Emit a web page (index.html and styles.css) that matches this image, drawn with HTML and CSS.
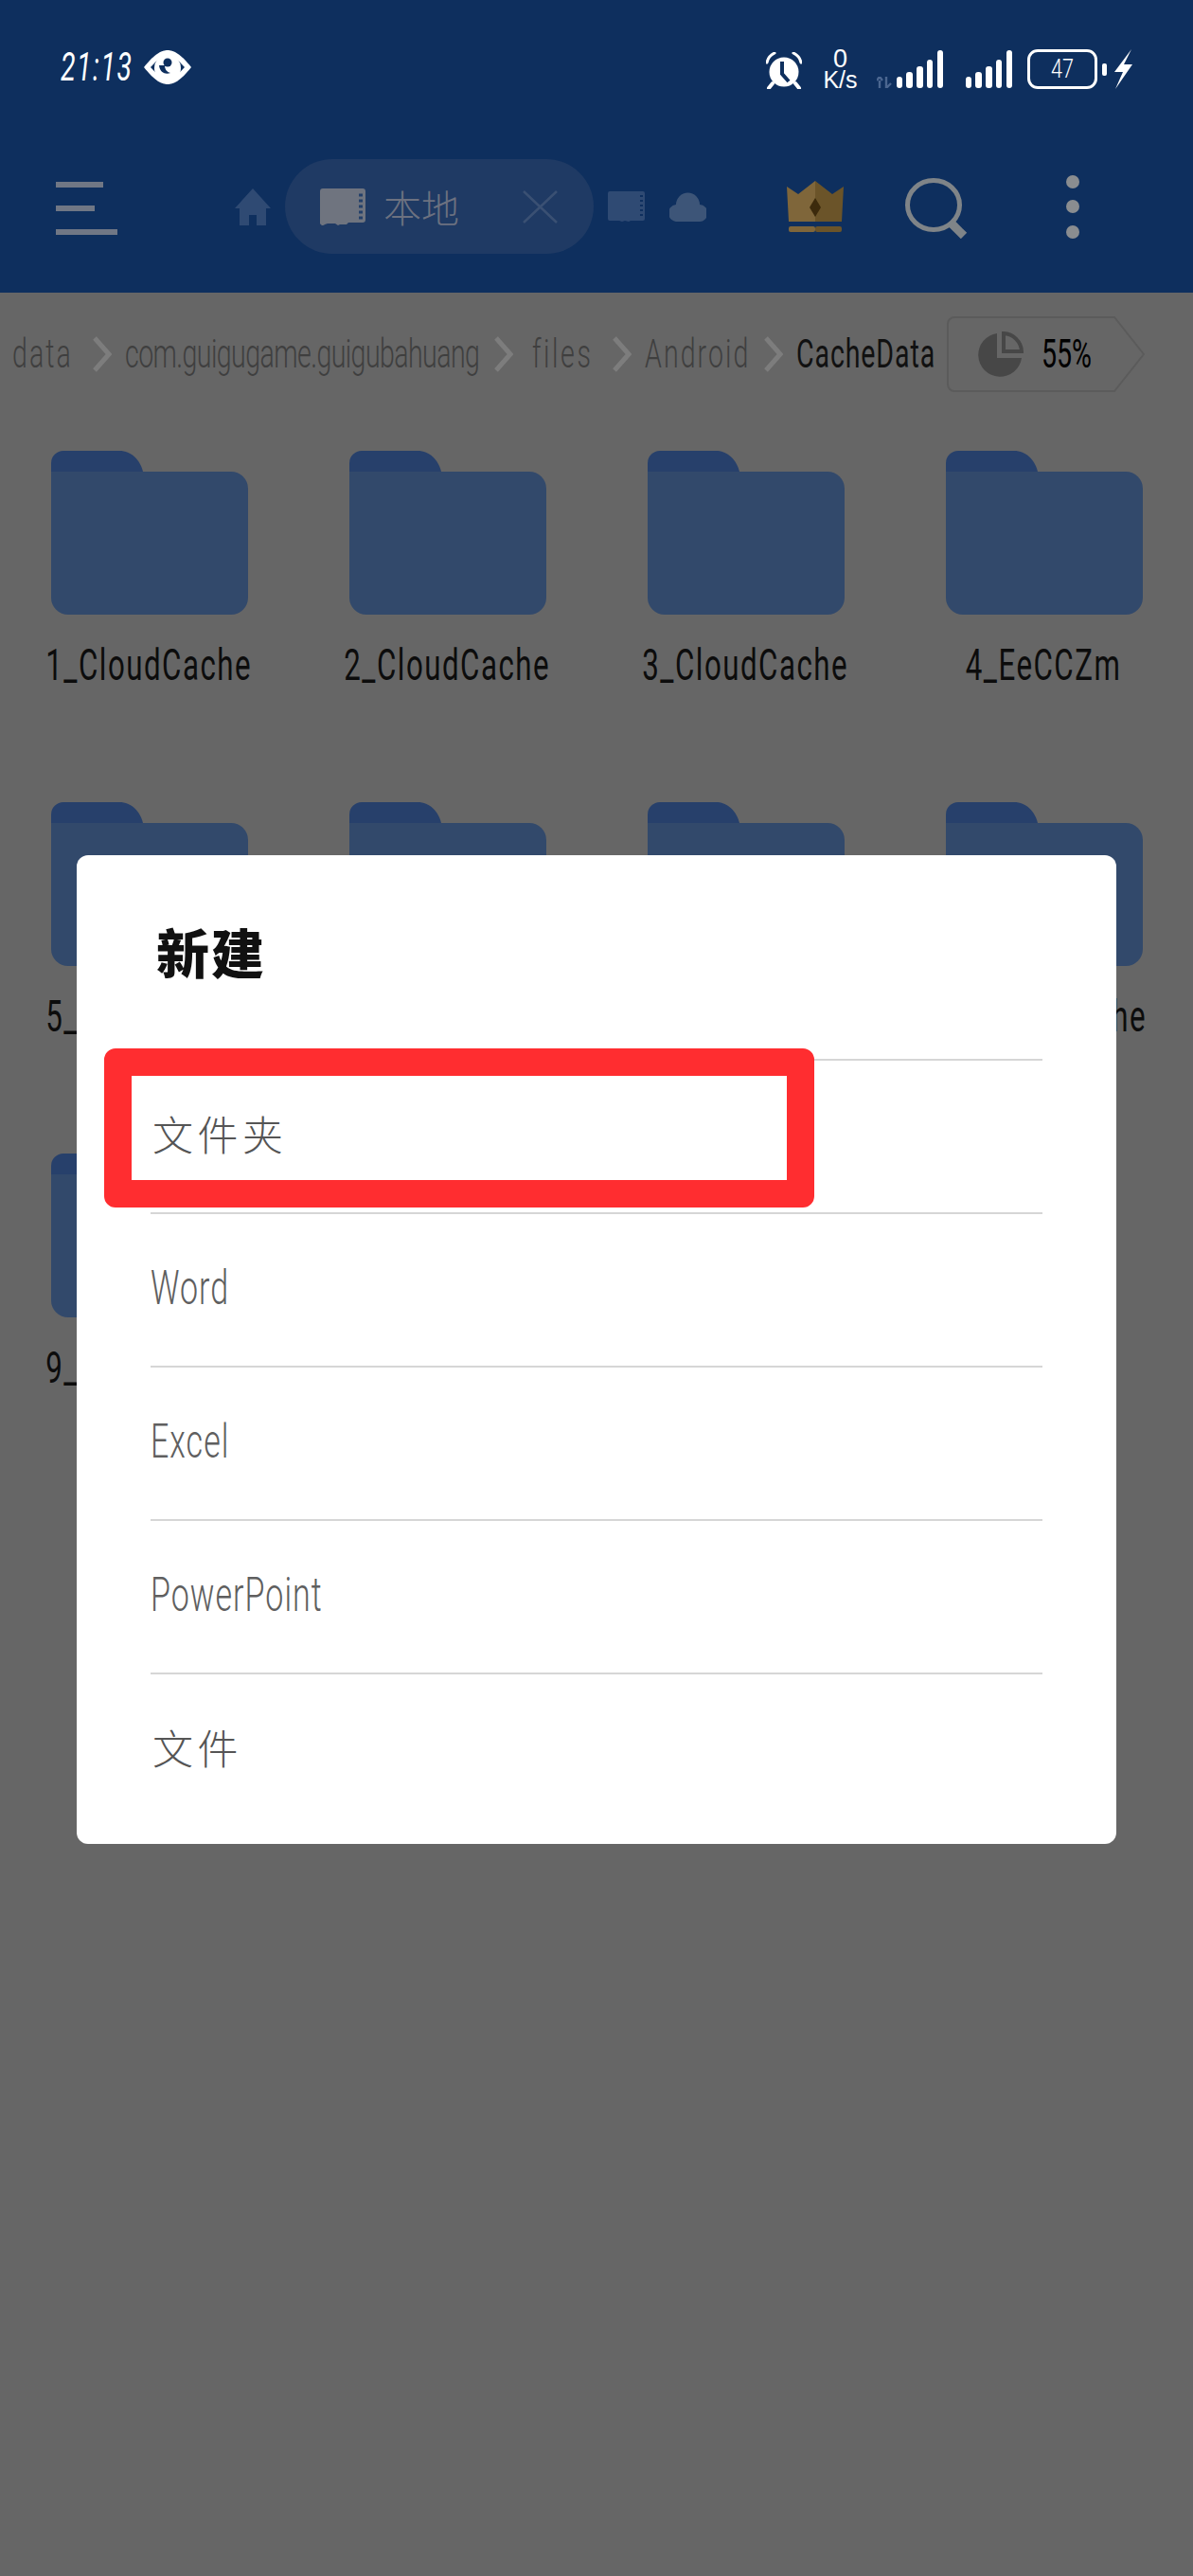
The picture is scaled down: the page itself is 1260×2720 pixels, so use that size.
FILE: index.html
```html
<!DOCTYPE html>
<html lang="zh">
<head>
<meta charset="utf-8">
<title>新建</title>
<link rel="stylesheet" href="styles.css">
</head>
<body>
<div class="screen">
  <header class="top">
    <div class="status">
      <div class="status-left">
        <span class="time"><span class="thin-text">21:13</span></span>
        <svg class="eye" viewBox="0 0 52 36"><path d="M1 18C13 3 20 0 26 0s13 3 25 18C39 33 32 36 26 36S13 33 1 18Z" fill="#fff"/><path d="M8 18C16 9 21 6 26 6s10 3 18 12C36 27 31 30 26 30S16 27 8 18Z" fill="#0e2f5e"/><circle cx="26" cy="19" r="14" fill="#fff"/><path d="M17 16c1 8 7 10 12 8-4-1-6-4-6-8Z" fill="#0e2f5e"/><circle cx="26" cy="13" r="4.5" fill="#0e2f5e"/></svg>
      </div>
      <div class="status-right">
        <svg class="alarm" viewBox="0 0 38 39"><circle cx="19" cy="21" r="15.5" fill="#fff"/><path d="M1 11C2 6 5 3 9 1M37 11C36 6 33 3 29 1" stroke="#fff" stroke-width="3" fill="none" stroke-linecap="round"/><path d="M7 33l-4 5M31 33l4 5" stroke="#fff" stroke-width="4" stroke-linecap="round"/><path d="M17 10v13l7 8" stroke="#0e2f5e" stroke-width="4" fill="none"/></svg>
        <div class="speed"><span class="speed-num">0</span><span class="speed-unit">K/s</span></div>
        <svg class="arrows" viewBox="0 0 16 12"><path d="M3 12V4M0 4l3-4 3 4M10 0v12M10 12l5-5" stroke="#4b6690" stroke-width="2.4" fill="none"/></svg>
        <svg class="signal" viewBox="0 0 50 40"><rect x="0" y="28" width="6" height="12" rx="3"/><rect x="10" y="23" width="7" height="17" rx="3"/><rect x="21" y="17" width="7" height="23" rx="3"/><rect x="32" y="10" width="6" height="30" rx="3"/><rect x="43" y="0" width="6" height="40" rx="3"/></svg>
        <svg class="signal signal-two" viewBox="0 0 50 40"><rect x="0" y="28" width="6" height="12" rx="3"/><rect x="10" y="23" width="7" height="17" rx="3"/><rect x="21" y="17" width="7" height="23" rx="3"/><rect x="32" y="10" width="6" height="30" rx="3"/><rect x="43" y="0" width="6" height="40" rx="3"/></svg>
        <div class="battery"><span class="battery-level">47</span></div>
        <span class="battery-tip"></span>
        <svg class="bolt" viewBox="0 0 20 42"><path d="M19 0 1 24h9L2 42 20 16h-9Z" fill="#fff"/></svg>
      </div>
    </div>
    <nav class="toolbar">
      <div class="menu"><span class="menu-line menu-a"></span><span class="menu-line menu-b"></span><span class="menu-line menu-c"></span></div>
      <svg class="home" viewBox="0 0 38 39"><path d="M19 0 38 21h-5v18H23V28h-8v11H5V21H0Z" fill="#2f4a73"/></svg>
      <div class="pill">
        <svg class="sd" viewBox="0 0 48 39"><path d="M3 0h42a3 3 0 0 1 3 3v30a3 3 0 0 1-3 3H30l-2 2h-7l-2 1-3-2H8l-3 1a3 3 0 0 1-5-3V3a3 3 0 0 1 3-3Z" fill="#6f747f"/><path d="M41 7h4M41 13h4M41 19h4M41 25h4M41 31h4" stroke="#24406a" stroke-width="3"/></svg>
        <span class="pill-text">本地</span>
        <svg class="close" viewBox="0 0 37 35"><path d="M1 1l35 33M36 1 1 34" stroke="#3a5073" stroke-width="2.5"/></svg>
      </div>
      <svg class="sd-small" viewBox="0 0 39 32"><path d="M2 0h35a2 2 0 0 1 2 2v27a2 2 0 0 1-2 2H24l-2 1-4-1-3 1-3-1H2a2 2 0 0 1-2-2V2a2 2 0 0 1 2-2Z" fill="#2f4a73"/><path d="M34 5h3M34 10h3M34 15h3M34 20h3M34 25h3" stroke="#0e2f5e" stroke-width="2"/></svg>
      <svg class="cloud" viewBox="0 0 39 32"><path d="M9 32a9 9 0 0 1-2-18 12.500 12.500 0 0 1 25 0 9 9 0 0 1-1 18Z" fill="#3d5578"/></svg>
      <svg class="crown" viewBox="0 0 60 54"><path d="M0 6 12 14 30 0V43H2Z" fill="#7f663a"/><path d="M60 6 48 14 30 0V43H58Z" fill="#6b5429"/><path d="M30 18l6 10-6 10-6-10Z" fill="#3c2a0c"/><rect x="2" y="48" width="28" height="6" rx="2" fill="#7f663a"/><rect x="30" y="48" width="28" height="6" rx="2" fill="#6b5429"/></svg>
      <svg class="search" viewBox="0 0 66 64"><ellipse cx="30" cy="28.500" rx="27.500" ry="26" fill="none" stroke="#7f8488" stroke-width="5"/><path d="M48 47 62 61" stroke="#7f8488" stroke-width="9"/></svg>
      <div class="dots"><span class="dot"></span><span class="dot"></span><span class="dot"></span></div>
    </nav>
  </header>

  <div class="crumbs">
    <span class="crumb crumb-data"><span class="thin-text">data</span></span>
    <svg class="chev" viewBox="0 0 21 38"><path d="M3 2l15 17L3 36" fill="none" stroke="#7d7d7d" stroke-width="5"/></svg>
    <span class="crumb crumb-com"><span class="thin-text">com.guigugame.guigubahuang</span></span>
    <svg class="chev" viewBox="0 0 21 38"><path d="M3 2l15 17L3 36" fill="none" stroke="#7d7d7d" stroke-width="5"/></svg>
    <span class="crumb crumb-files"><span class="thin-text">files</span></span>
    <svg class="chev" viewBox="0 0 21 38"><path d="M3 2l15 17L3 36" fill="none" stroke="#7d7d7d" stroke-width="5"/></svg>
    <span class="crumb crumb-android"><span class="thin-text">Android</span></span>
    <svg class="chev" viewBox="0 0 21 38"><path d="M3 2l15 17L3 36" fill="none" stroke="#7d7d7d" stroke-width="5"/></svg>
    <span class="crumb crumb-now"><span class="thin-text">CacheData</span></span>
    <div class="chip">
      <svg class="chip-shape" viewBox="0 0 209 80"><path d="M8 1H177L208 40 177 79H8a7 7 0 0 1-7-7V8a7 7 0 0 1 7-7Z" fill="none" stroke="#5b5b5b" stroke-width="2"/></svg>
      <svg class="pie" viewBox="0 0 48 48"><path d="M20 2A23 23 0 1 0 46 28H20Z" fill="#474747"/><path d="M27 2A20 20 0 0 1 46 21H27Z" fill="none" stroke="#474747" stroke-width="4"/></svg>
      <span class="chip-text"><span class="thin-text">55%</span></span>
    </div>
  </div>

  <main class="grid">
    <div class="item"><svg class="folder" viewBox="0 0 208 173"><path d="M13 0H72C85 0 94 10 97 22H0V13A13 13 0 0 1 13 0Z" fill="#27406b"/><path d="M0 22H190a18 18 0 0 1 18 18V155a18 18 0 0 1-18 18H18a18 18 0 0 1-18-18Z" fill="#32496b"/></svg><span class="label"><span class="thin-text">1_CloudCache</span></span></div>
    <div class="item"><svg class="folder" viewBox="0 0 208 173"><path d="M13 0H72C85 0 94 10 97 22H0V13A13 13 0 0 1 13 0Z" fill="#27406b"/><path d="M0 22H190a18 18 0 0 1 18 18V155a18 18 0 0 1-18 18H18a18 18 0 0 1-18-18Z" fill="#32496b"/></svg><span class="label"><span class="thin-text">2_CloudCache</span></span></div>
    <div class="item"><svg class="folder" viewBox="0 0 208 173"><path d="M13 0H72C85 0 94 10 97 22H0V13A13 13 0 0 1 13 0Z" fill="#27406b"/><path d="M0 22H190a18 18 0 0 1 18 18V155a18 18 0 0 1-18 18H18a18 18 0 0 1-18-18Z" fill="#32496b"/></svg><span class="label"><span class="thin-text">3_CloudCache</span></span></div>
    <div class="item"><svg class="folder" viewBox="0 0 208 173"><path d="M13 0H72C85 0 94 10 97 22H0V13A13 13 0 0 1 13 0Z" fill="#27406b"/><path d="M0 22H190a18 18 0 0 1 18 18V155a18 18 0 0 1-18 18H18a18 18 0 0 1-18-18Z" fill="#32496b"/></svg><span class="label"><span class="thin-text">4_EeCCZm</span></span></div>
    <div class="item"><svg class="folder" viewBox="0 0 208 173"><path d="M13 0H72C85 0 94 10 97 22H0V13A13 13 0 0 1 13 0Z" fill="#27406b"/><path d="M0 22H190a18 18 0 0 1 18 18V155a18 18 0 0 1-18 18H18a18 18 0 0 1-18-18Z" fill="#32496b"/></svg><span class="label"><span class="thin-text">5_CloudCache</span></span></div>
    <div class="item"><svg class="folder" viewBox="0 0 208 173"><path d="M13 0H72C85 0 94 10 97 22H0V13A13 13 0 0 1 13 0Z" fill="#27406b"/><path d="M0 22H190a18 18 0 0 1 18 18V155a18 18 0 0 1-18 18H18a18 18 0 0 1-18-18Z" fill="#32496b"/></svg><span class="label"><span class="thin-text">6_CloudCache</span></span></div>
    <div class="item"><svg class="folder" viewBox="0 0 208 173"><path d="M13 0H72C85 0 94 10 97 22H0V13A13 13 0 0 1 13 0Z" fill="#27406b"/><path d="M0 22H190a18 18 0 0 1 18 18V155a18 18 0 0 1-18 18H18a18 18 0 0 1-18-18Z" fill="#32496b"/></svg><span class="label"><span class="thin-text">7_CloudCache</span></span></div>
    <div class="item"><svg class="folder" viewBox="0 0 208 173"><path d="M13 0H72C85 0 94 10 97 22H0V13A13 13 0 0 1 13 0Z" fill="#27406b"/><path d="M0 22H190a18 18 0 0 1 18 18V155a18 18 0 0 1-18 18H18a18 18 0 0 1-18-18Z" fill="#32496b"/></svg><span class="label"><span class="thin-text">8_CloudCache</span></span></div>
    <div class="item"><svg class="folder" viewBox="0 0 208 173"><path d="M13 0H72C85 0 94 10 97 22H0V13A13 13 0 0 1 13 0Z" fill="#27406b"/><path d="M0 22H190a18 18 0 0 1 18 18V155a18 18 0 0 1-18 18H18a18 18 0 0 1-18-18Z" fill="#32496b"/></svg><span class="label"><span class="thin-text">9_CloudCache</span></span></div>
  </main>

  <section class="dialog">
    <h1 class="dialog-title">新建</h1>
    <ul class="options">
      <li class="option option-cjk">文件夹</li>
      <li class="option"><span class="thin-text">Word</span></li>
      <li class="option"><span class="thin-text">Excel</span></li>
      <li class="option"><span class="thin-text">PowerPoint</span></li>
      <li class="option option-cjk">文件</li>
    </ul>
    <div class="highlight"></div>
  </section>
</div>
</body>
</html>
```
FILE: styles.css
```css
* { box-sizing: border-box; }
html, body { margin: 0; padding: 0; }
body { background: #666; font-family: Roboto, "Liberation Sans", "Noto Sans CJK SC", sans-serif; font-weight: 300; }
.screen { position: relative; width: 1260px; height: 2720px; overflow: hidden; background: #666; }
.thin-text { display: inline-block; white-space: nowrap; transform: scaleX(0.68); transform-origin: 0 50%; }

.top { height: 309px; background: #0e2f5e; padding-top: 50px; }
.status { display: flex; justify-content: space-between; align-items: flex-start; height: 46px; padding: 0 64px; }
.status-left { display: flex; align-items: center; gap: 10px; height: 42px; }
.time { width: 77px; color: #fff; font-size: 42px; line-height: 42px; font-style: italic; font-weight: 400; letter-spacing: 2.200px; overflow: visible; }
.eye { width: 52px; height: 36px; }
.status-right { display: flex; align-items: flex-end; height: 44px; }
.alarm { width: 38px; height: 39px; margin-right: 21px; }
.speed { display: flex; flex-direction: column; align-items: center; width: 39px; color: #fff; font-family: "Liberation Sans", sans-serif; font-weight: 400; margin-right: 19px; }
.speed-num { font-size: 27px; line-height: 24px; }
.speed-unit { font-size: 25px; line-height: 20px; }
.arrows { width: 16px; height: 12px; margin-right: 5px; margin-bottom: 1px; }
.signal { width: 50px; height: 40px; fill: #fff; margin-bottom: 1px; }
.signal-two { margin-left: 23px; margin-right: 15px; }
.battery { display: flex; align-items: center; justify-content: center; width: 74px; height: 42px; border: 3px solid #fff; border-radius: 11px; }
.battery-level { color: #fff; font-size: 27px; line-height: 30px; transform: scaleX(0.8); }
.battery-tip { width: 5px; height: 13px; background: #fff; border-radius: 2px; margin: 0 7px 14px 5px; }
.bolt { width: 20px; height: 42px; }

.toolbar { display: flex; align-items: center; height: 100px; margin-top: 72px; padding-left: 59px; }
.menu { display: flex; flex-direction: column; width: 65px; gap: 19px; margin-top: 4px; }
.menu-line { display: block; height: 6px; background: #707785; }
.menu-a { width: 50px; }
.menu-b { width: 41px; }
.menu-c { width: 65px; }
.home { width: 38px; height: 39px; margin-left: 124px; }
.pill { display: flex; align-items: center; width: 326px; height: 100px; margin-left: 15px; padding-left: 37px; background: #1f3a64; border-radius: 50px; }
.sd { width: 48px; height: 39px; }
.pill-text { width: 147px; margin-left: 19px; color: #6c7180; font-size: 40px; font-family: "Noto Sans CJK SC", sans-serif; font-weight: 300; }
.close { width: 37px; height: 35px; }
.sd-small { width: 39px; height: 32px; margin-left: 15px; }
.cloud { width: 39px; height: 32px; margin-left: 26px; }
.crown { width: 60px; height: 54px; margin-left: 85px; }
.search { width: 66px; height: 64px; margin-left: 65px; margin-top: 3px; }
.dots { display: flex; flex-direction: column; gap: 12.500px; margin-left: 104px; }
.dot { display: block; width: 14px; height: 14px; border-radius: 50%; background: #8a8d90; }

.crumbs { display: flex; align-items: center; height: 105px; padding-left: 13px; margin-top: 12px; }
.crumb { color: #3f3f3f; font-size: 42px; line-height: 50px; white-space: nowrap; flex: none; }
.crumb-data { width: 70px; letter-spacing: 3px; }
.crumb-com { width: 375px; letter-spacing: -0.850px; }
.crumb-files { width: 76px; padding-left: 6px; letter-spacing: 3.800px; }
.crumb-android { width: 111px; letter-spacing: 3px; }
.crumb-now { width: 145px; color: #111; font-weight: 400; letter-spacing: 1.300px; }
.chev { width: 21px; height: 38px; margin: 0 14px; flex: none; }
.chip { position: relative; display: flex; align-items: center; width: 209px; height: 80px; margin-left: 14px; padding-left: 33px; flex: none; }
.chip-shape { position: absolute; inset: 0; width: 209px; height: 80px; }
.pie { width: 48px; height: 48px; }
.chip-text { margin-left: 19px; color: #000; font-size: 42px; font-weight: 400; }

.grid { display: grid; grid-template-columns: repeat(4, 315px); grid-auto-rows: 371px; margin-top: 50px; }
.item { display: flex; flex-direction: column; align-items: center; }
.folder { width: 208px; height: 173px; flex: none; }
.label { margin-top: 30px; color: #0c0c0c; font-size: 46px; line-height: 46px; font-weight: 400; letter-spacing: 2.200px; white-space: nowrap; }
.label .thin-text { transform-origin: 50% 50%; }

.dialog { position: absolute; left: 81px; top: 903px; width: 1098px; height: 1044px; background: #fff; border-radius: 12px; }
.dialog-title { margin: 0; padding: 69px 0 0 84px; height: 215px; color: #111; font-size: 56px; line-height: 64px; font-weight: 900; font-family: "Noto Sans CJK SC", sans-serif; letter-spacing: 2px; }
.options { list-style: none; margin: 0 78px; padding: 0; }
.option { height: 162px; border-top: 2px solid #d6d6d6; color: #5f5f5f; font-size: 50px; line-height: 156px; letter-spacing: 1.500px; }
.option-cjk { padding-left: 2px; font-family: "Noto Sans CJK SC", sans-serif; font-weight: 300; color: #555; letter-spacing: 4.500px; font-size: 43px; line-height: 152px; }
.highlight { position: absolute; left: 29px; top: 204px; width: 750px; height: 168px; border: 29px solid #ff2d30; border-radius: 12px; }
```
